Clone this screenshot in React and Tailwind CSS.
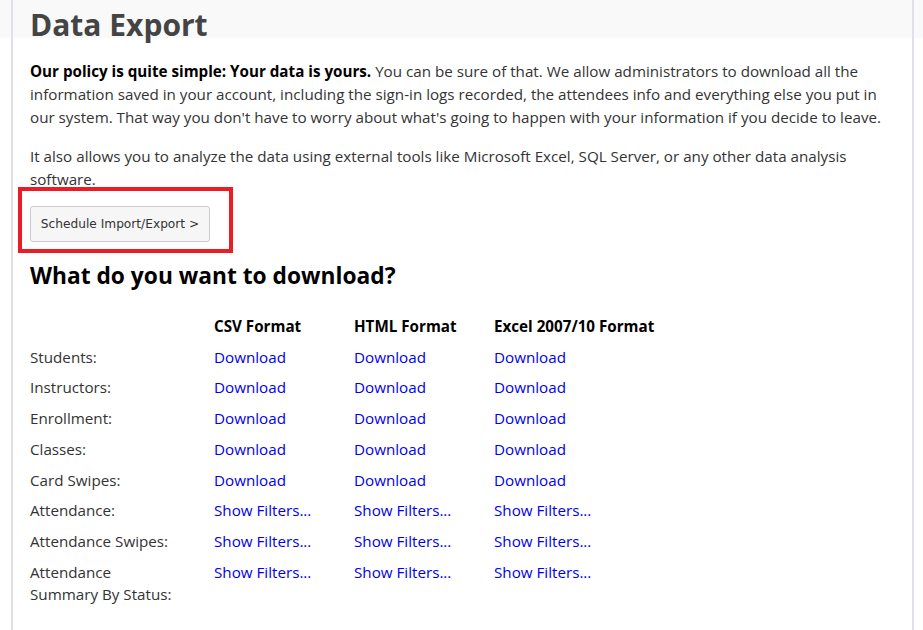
import React from 'react';

const rows = [
  { label: 'Students:', kind: 'Download' },
  { label: 'Instructors:', kind: 'Download' },
  { label: 'Enrollment:', kind: 'Download' },
  { label: 'Classes:', kind: 'Download' },
  { label: 'Card Swipes:', kind: 'Download' },
  { label: 'Attendance:', kind: 'Show Filters...' },
  { label: 'Attendance Swipes:', kind: 'Show Filters...' },
  { label: 'Attendance Summary By Status:', kind: 'Show Filters...' },
];

const formats = ['CSV Format', 'HTML Format', 'Excel 2007/10 Format'];

export default function App() {
  return (
    <div
      className="h-[630px] overflow-hidden bg-[linear-gradient(to_bottom,#f9f9fa_38px,#ffffff_38px)] pl-[11px] pr-[9px]"
      style={{ fontFamily: '"Open Sans", "Liberation Sans", sans-serif' }}
    >
      <div className="relative h-full border-x-2 border-[#e2ddef] pl-[17px] pr-[24px]">
        {/* Header */}
        <div className="h-[38px] pt-[10px]">
          <h1 className="text-[30px] font-bold leading-[30px] text-[#444444]">Data Export</h1>
        </div>

        {/* Intro */}
        <div className="pt-[22px] text-[15.2px] leading-[23px] text-[#333333]">
          <p>
            <strong className="font-bold text-black">Our policy is quite simple: Your data is yours.</strong> You can
            be sure of that. We allow administrators to download all the information saved in your account, including
            the sign-in logs recorded, the attendees info and everything else you put in our system. That way you
            don't have to worry about what's going to happen with your information if you decide to leave.
          </p>
          <p className="mt-4">
            It also allows you to analyze the data using external tools like Microsoft Excel, SQL Server, or any other
            data analysis software.
          </p>
        </div>

        <button
          className="mt-[15px] h-[36px] w-[180px] rounded-[3px] border border-[#cccccc] bg-[#f6f6f6] text-[12.2px] text-[#333333]"
          style={{ fontFamily: '"DejaVu Sans", Verdana, sans-serif' }}
        >
          Schedule Import/Export &gt;
        </button>

        <h2 className="mt-[19px] text-[22.75px] font-bold leading-[29px] text-black">What do you want to download?</h2>

        {/* Download table */}
        <div className="mt-[21px] grid grid-cols-[184px_140px_140px_1fr] text-[15.2px] leading-[22.7px] text-[#333333]">
          <div className="py-1" />
          {formats.map((f) => (
            <div key={f} className="py-1 font-bold text-black">
              {f}
            </div>
          ))}
          {rows.map((r) => (
            <React.Fragment key={r.label}>
              <div className="py-1 pr-[38px]">{r.label}</div>
              {formats.map((f) => (
                <div key={f} className="py-1">
                  <a href="#" className="text-[#0000ee]">
                    {r.kind}
                  </a>
                </div>
              ))}
            </React.Fragment>
          ))}
        </div>

        {/* Annotation highlight */}
        <div className="pointer-events-none absolute left-[5px] top-[187px] h-[66px] w-[215px] border-4 border-[#ec1c24]" />
      </div>
    </div>
  );
}
